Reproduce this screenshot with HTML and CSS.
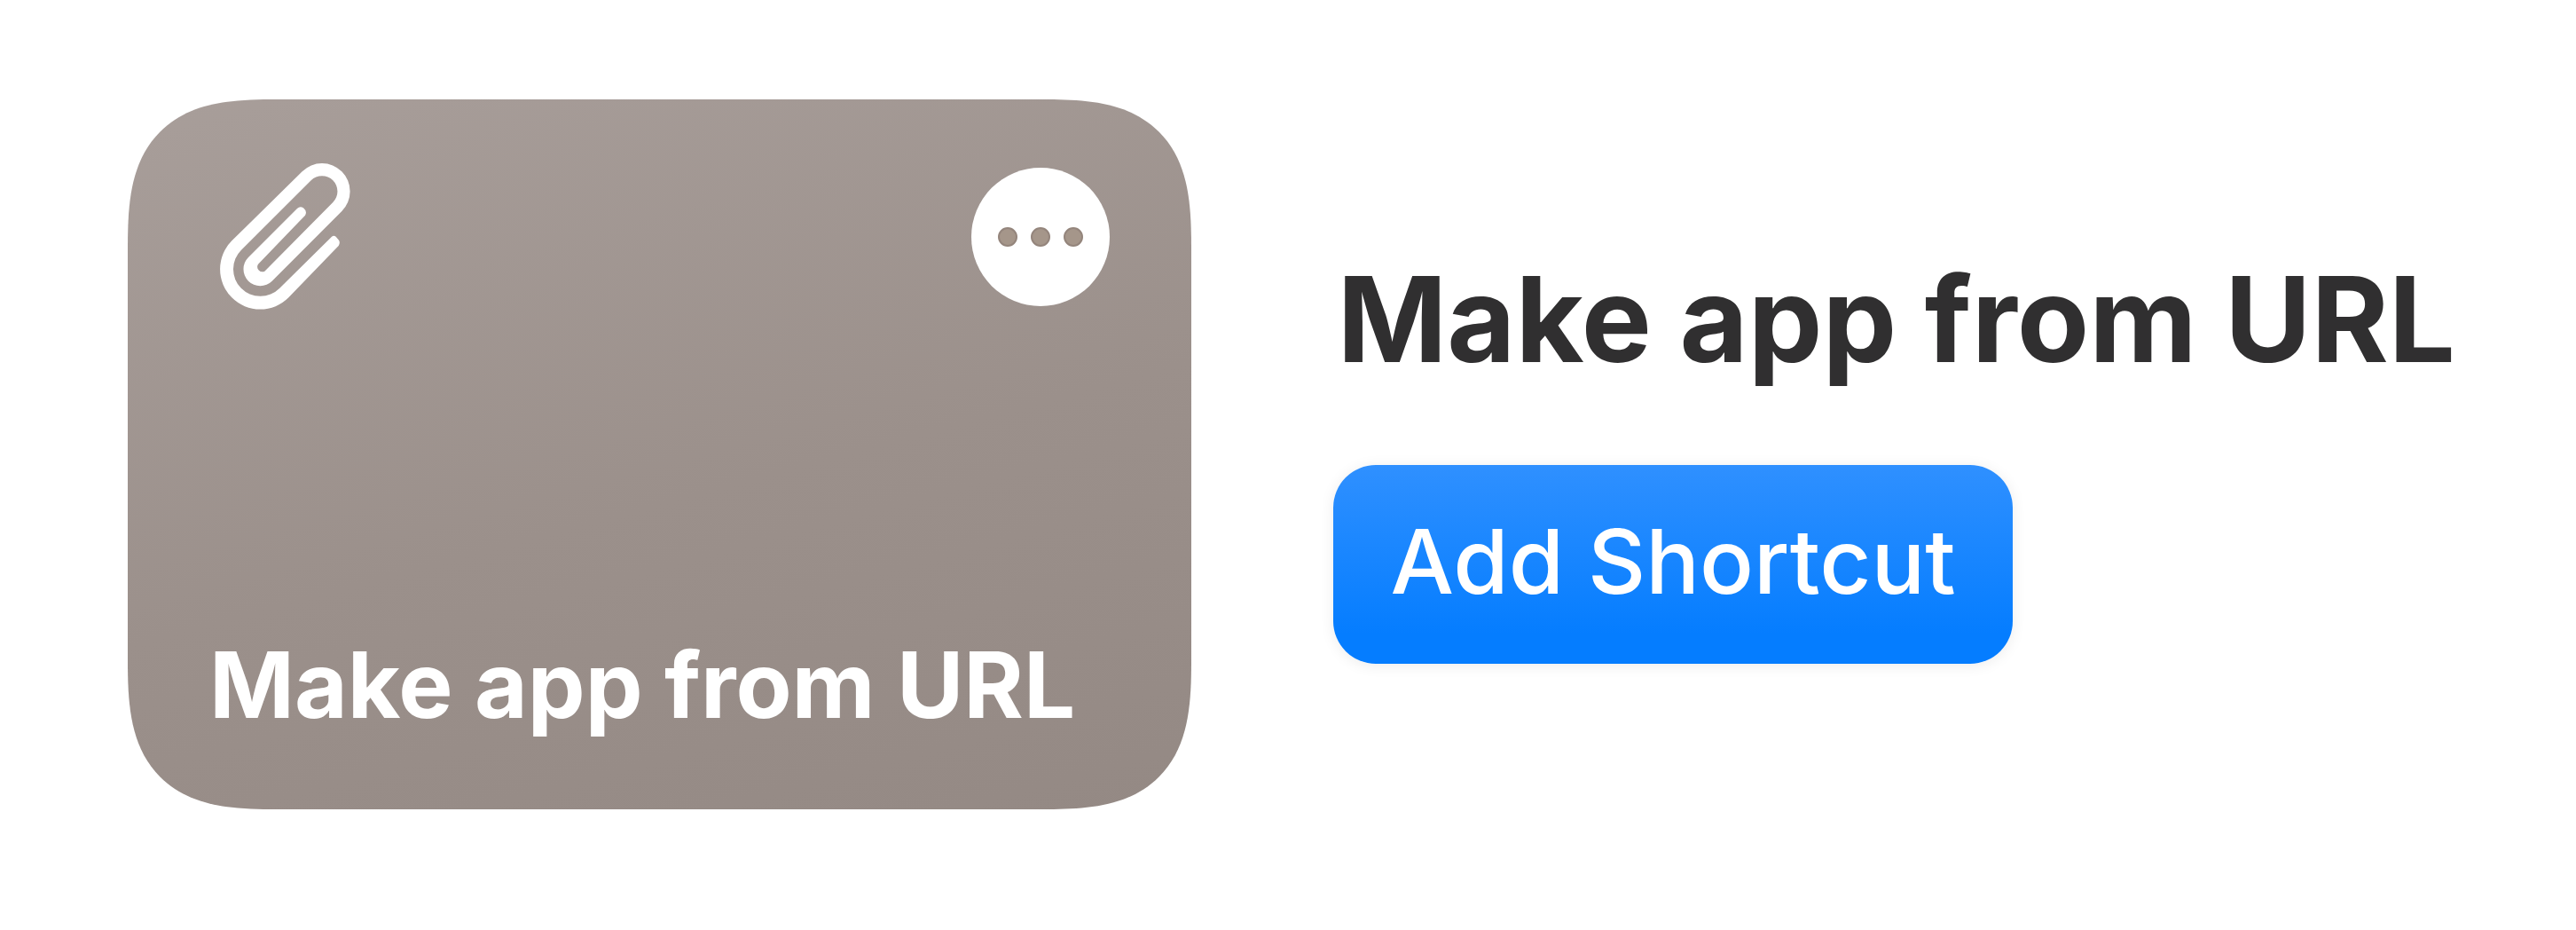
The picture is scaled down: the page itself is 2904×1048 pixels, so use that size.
FILE: index.html
```html
<!DOCTYPE html>
<html lang="en">
<head>
  <meta charset="utf-8">
  <meta name="viewport" content="width=device-width, initial-scale=1">
  <title>Make app from URL</title>
  <link rel="stylesheet" href="styles.css">
</head>
<body>
  <main class="shortcut">
    <article class="card">
      <div class="card-top">
        <svg class="clip" viewBox="57 66 441 495" aria-hidden="true">
          <path fill="#fff" d="M435 314Q442 308 449 314L458 325Q465 333 458 345L289 520A130 130 0 0 1 97 328L335 94A90 90 0 0 1 469 228L233 464A50 50 0 0 1 153 384L318 219Q328 209 339 217Q353 229 345 242L186 407A17 17 0 0 0 208 431L439 198A50 50 0 0 0 365 124L129 359A90 90 0 0 0 258 489Z"/>
        </svg>
        <button class="more" type="button" aria-label="More options">
          <span class="dot"></span><span class="dot"></span><span class="dot"></span>
        </button>
      </div>
      <h2 class="card-title">Make app from URL</h2>
    </article>
    <section class="details">
      <h1 class="title">Make app from URL</h1>
      <button class="add" type="button">Add Shortcut</button>
    </section>
  </main>
</body>
</html>
```

FILE: styles.css
```css
* {
  box-sizing: border-box;
}

body {
  margin: 0;
  background: #fff;
  font-family: Inter, "Liberation Sans", sans-serif;
}

.shortcut {
  display: flex;
  align-items: center;
  gap: 160px;
  padding: 112px 136px 136px 144px;
}

.card {
  flex: 0 1 1200px;
  aspect-ratio: 3 / 2;
  display: flex;
  flex-direction: column;
  justify-content: space-between;
  padding: 72px 92px 76px;
  border-radius: 124px;
  background: linear-gradient(165deg, #a89e9a 0%, #9b908b 55%, #948984 100%);
  color: #fff;
}

@supports (corner-shape: squircle) {
  .card {
    border-radius: 168px;
    corner-shape: superellipse(1.5);
  }
}

.card-top {
  display: flex;
  justify-content: space-between;
  align-items: center;
  padding-left: 12px;
}

.clip {
  width: 147px;
  height: 165px;
}

.more {
  display: flex;
  align-items: center;
  justify-content: center;
  gap: 15px;
  width: 156px;
  height: 156px;
  padding: 0;
  border: 0;
  border-radius: 50%;
  background: #fff;
}

.dot {
  width: 22px;
  height: 22px;
  border: 2px solid #94857c;
  border-radius: 50%;
  background: #a5968a;
}

.card-title {
  margin: 0;
  font-size: 103px;
  font-weight: 700;
  line-height: 128px;
  white-space: nowrap;
}

.details {
  display: flex;
  flex-direction: column;
  align-items: flex-start;
  gap: 84px;
  padding-top: 4px;
}

.title {
  margin: 0;
  padding-left: 4px;
  color: #302f30;
  font-size: 133px;
  font-weight: 700;
  line-height: 160px;
  white-space: nowrap;
}

.add {
  padding: 44px 64px 52px;
  border: 0;
  border-radius: 48px;
  background: linear-gradient(#2f90ff, #057dff 85%);
  box-shadow: 0 2px 16px rgba(0, 0, 0, 0.08);
  color: #fff;
  font-family: inherit;
  font-size: 101px;
  font-weight: 500;
  line-height: 128px;
  white-space: nowrap;
}
```
